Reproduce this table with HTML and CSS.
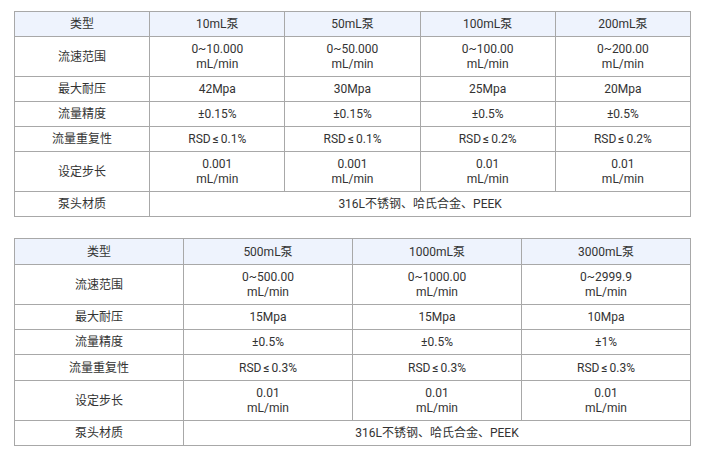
FILE: index.html
```html
<!DOCTYPE html>
<html lang="zh">
<head>
<meta charset="utf-8">
<link rel="stylesheet" href="styles.css">
</head>
<body>
<div class="page">
<table class="spec">
  <tr class="head"><td>类型</td><td>10mL泵</td><td>50mL泵</td><td>100mL泵</td><td>200mL泵</td></tr>
  <tr><td>流速范围</td><td>0~10.000<br>mL/min</td><td>0~50.000<br>mL/min</td><td>0~100.00<br>mL/min</td><td>0~200.00<br>mL/min</td></tr>
  <tr><td>最大耐压</td><td>42Mpa</td><td>30Mpa</td><td>25Mpa</td><td>20Mpa</td></tr>
  <tr><td>流量精度</td><td>±0.15%</td><td>±0.15%</td><td>±0.5%</td><td>±0.5%</td></tr>
  <tr><td>流量重复性</td><td>RSD<span class="le">≤</span>0.1%</td><td>RSD<span class="le">≤</span>0.1%</td><td>RSD<span class="le">≤</span>0.2%</td><td>RSD<span class="le">≤</span>0.2%</td></tr>
  <tr><td>设定步长</td><td>0.001<br>mL/min</td><td>0.001<br>mL/min</td><td>0.01<br>mL/min</td><td>0.01<br>mL/min</td></tr>
  <tr><td>泵头材质</td><td colspan="4">316L不锈钢、哈氏合金、PEEK</td></tr>
</table>
<table class="spec">
  <tr class="head"><td>类型</td><td>500mL泵</td><td>1000mL泵</td><td>3000mL泵</td></tr>
  <tr><td>流速范围</td><td>0~500.00<br>mL/min</td><td>0~1000.00<br>mL/min</td><td>0~2999.9<br>mL/min</td></tr>
  <tr><td>最大耐压</td><td>15Mpa</td><td>15Mpa</td><td>10Mpa</td></tr>
  <tr><td>流量精度</td><td>±0.5%</td><td>±0.5%</td><td>±1%</td></tr>
  <tr class="tall1"><td>流量重复性</td><td>RSD<span class="le">≤</span>0.3%</td><td>RSD<span class="le">≤</span>0.3%</td><td>RSD<span class="le">≤</span>0.3%</td></tr>
  <tr><td>设定步长</td><td>0.01<br>mL/min</td><td>0.01<br>mL/min</td><td>0.01<br>mL/min</td></tr>
  <tr><td>泵头材质</td><td colspan="3">316L不锈钢、哈氏合金、PEEK</td></tr>
</table>
</div>
</body>
</html>
```
FILE: styles.css
```css
html, body {
  margin: 0;
  padding: 0;
  background: #ffffff;
}
.page {
  padding: 11px 15px 0 14px;
  display: flex;
  flex-direction: column;
  gap: 21px;
}
.spec {
  width: 677px;
  border-collapse: collapse;
  table-layout: fixed;
  font-family: Roboto, "DejaVu Sans", "Noto Sans CJK SC", sans-serif;
  font-size: 12px;
  line-height: 15px;
  color: #333333;
}
.spec td {
  border: 1px solid #a8a8a8;
  padding: 5px 4px 4px;
  text-align: center;
  vertical-align: middle;
}
.spec .head td {
  background: #eef3fd;
}
.spec + .spec .head td {
  padding-top: 6px;
}
.spec .tall1 td {
  padding-top: 6px;
}
.le {
  margin: 0 2px;
}
```
